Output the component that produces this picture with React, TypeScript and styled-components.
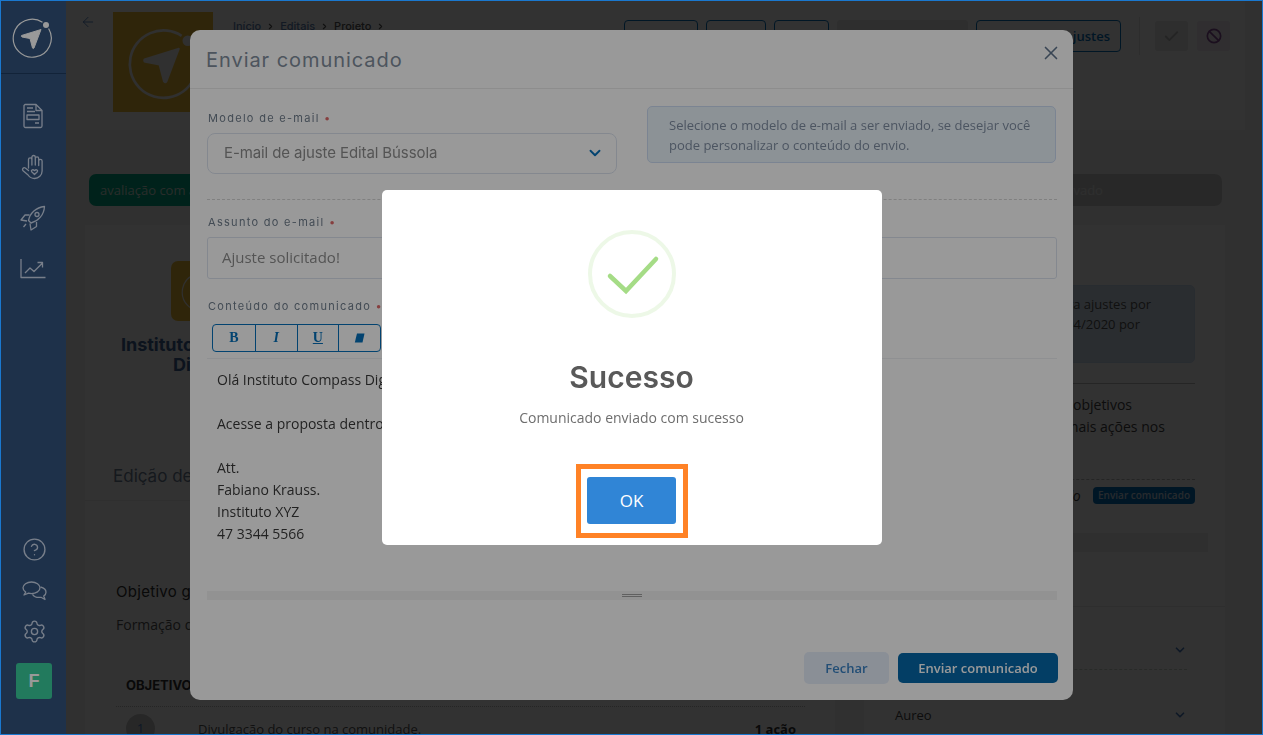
import styled, { createGlobalStyle } from "styled-components";
import { ChevronDown, CircleHelp, Settings, X, Check, Ban, ArrowLeft, ChevronRight } from "lucide-react";

const GlobalStyle = createGlobalStyle`
  html, body {
    margin: 0;
    padding: 0;
    height: 100%;
    overflow: hidden;
    font-family: "Open Sans", "Liberation Sans", sans-serif;
  }
  * {
    box-sizing: border-box;
  }
`;

const HEADING_FONT = `"Inter", "Liberation Sans", sans-serif`;

const AppRoot = styled.div`
  display: flex;
  width: 1263px;
  height: 735px;
  overflow: hidden;
  background: #f5f5f5;
`;

/* sits above the first backdrop, only the second one dims it */
const Sidebar = styled.nav`
  position: relative;
  z-index: 2;
  flex: 0 0 66px;
  display: flex;
  flex-direction: column;
  background: #32537c;
  color: #c8d3e6;
`;

const SideLogo = styled.div`
  height: 74px;
  display: flex;
  align-items: center;
  justify-content: center;
  border-bottom: 1px solid #1f3b60;
  padding-right: 2px;
`;

const SideNav = styled.div`
  display: flex;
  flex-direction: column;
  padding-top: 16px;
`;

const SideItem = styled.div<{ $h?: number }>`
  height: ${(p) => p.$h ?? 51}px;
  display: flex;
  align-items: center;
  justify-content: center;
`;

const SideBottom = styled.div`
  margin-top: auto;
  display: flex;
  flex-direction: column;
  align-items: center;
  padding: 0 0 36px 2px;
`;

const Avatar = styled.div`
  width: 36px;
  height: 36px;
  margin-top: 11px;
  border-radius: 3px;
  background: #3acb9b;
  color: #fff;
  font: bold 18px "Liberation Sans", sans-serif;
  display: flex;
  align-items: center;
  justify-content: center;
`;

const Main = styled.main`
  flex: 1;
  display: flex;
  flex-direction: column;
  min-width: 0;
`;

const HeaderCard = styled.header`
  width: 1179px;
  height: 130px;
  flex: none;
  display: flex;
  align-items: flex-start;
  padding: 12px 6px 0 14px;
  background: #fff;
`;

const BackLink = styled.div`
  width: 33px;
  padding-top: 1px;
  color: #4b7cc0;
`;

const YellowLogo = styled.div`
  width: 100px;
  height: 100px;
  flex: none;
  background: #efbf37;
  display: flex;
  align-items: center;
  justify-content: center;
`;

const Crumbs = styled.div`
  display: flex;
  align-items: center;
  gap: 5px;
  margin: 7px 0 0 20px;
  font: 500 11px ${HEADING_FONT};
  color: #5d82b3;
  white-space: nowrap;
`;

const CrumbCurrent = styled.span`
  color: #555;
`;

const HeaderActions = styled.div`
  margin-left: auto;
  display: flex;
  align-items: center;
  height: 32px;
  margin-top: 8px;
`;

const OutlineBtn = styled.div<{ $w: number }>`
  width: ${(p) => p.$w}px;
  height: 32px;
  margin-right: 8px;
  border: 1px solid #0571bb;
  border-radius: 4px;
  color: #0571bb;
  font: 600 13px "Open Sans", sans-serif;
  display: flex;
  align-items: center;
  justify-content: flex-end;
  padding-right: 10px;
`;

const GrayBtn = styled.div`
  width: 131px;
  height: 32px;
  margin-right: 8px;
  background: #ececec;
  border-radius: 3px;
`;

const HeaderDivider = styled.div`
  width: 1px;
  height: 38px;
  margin: 0 15px 0 10px;
  background: #e6e6e6;
`;

const SquareBtn = styled.div<{ $bg: string; $fg: string }>`
  width: 33px;
  height: 30px;
  margin-right: 9px;
  border-radius: 3px;
  background: ${(p) => p.$bg};
  color: ${(p) => p.$fg};
  display: flex;
  align-items: center;
  justify-content: center;
`;

const StatusRow = styled.div`
  display: flex;
  justify-content: space-between;
  margin: 44px 41px 0 23px;
  height: 32px;
`;

const StatusPill = styled.div<{ $bg: string; $fg: string; $w: number; $pad: number }>`
  width: ${(p) => p.$w}px;
  border-radius: 7px;
  background: ${(p) => p.$bg};
  color: ${(p) => p.$fg};
  padding-left: ${(p) => p.$pad}px;
  font-size: 13px;
  line-height: 32px;
`;

const Columns = styled.div`
  display: grid;
  grid-template-columns: 750px 361px;
  column-gap: 29px;
  margin: 19px 0 0 19px;
`;

const Card = styled.section`
  background: #fff;
  height: 700px;
`;

const OrgBlock = styled.div`
  width: 200px;
  margin: 36px 0 0 16px;
  display: flex;
  flex-direction: column;
  align-items: center;
`;

const OrgLogo = styled.div`
  width: 60px;
  height: 60px;
  border-radius: 7px;
  background: #efbf37;
  display: flex;
  align-items: center;
  justify-content: center;
`;

const OrgName = styled.div`
  margin-top: 14px;
  font: 700 18px/20px ${HEADING_FONT};
  color: #3f6496;
  text-align: center;
`;

const CardTabs = styled.div`
  height: 49px;
  margin-top: 77px;
  border-bottom: 1px solid #eee;
  padding: 12px 0 0 28px;
  font: 400 17px/24px ${HEADING_FONT};
  color: #6f8096;
`;

const ObjectiveBlock = styled.div`
  padding: 81px 30px 0 31px;
`;

const ObjectiveTitle = styled.div`
  font: 400 15px/20px ${HEADING_FONT};
  letter-spacing: 0.3px;
  color: #333;
`;

const ObjectiveText = styled.div`
  margin-top: 13px;
  font-size: 14px;
  line-height: 20px;
  color: #555;
`;

const TableHead = styled.div`
  margin-top: 40px;
  padding: 0 0 11px 10px;
  border-bottom: 1px dotted #bbb;
  font: 700 13px/20px ${HEADING_FONT};
  color: #333;
`;

const TableRow = styled.div`
  display: grid;
  grid-template-columns: 72px 1fr auto;
  align-items: center;
  padding: 7px 9px 0 10px;
  font-size: 13px;
  color: #555;
`;

const RowNumber = styled.div`
  width: 29px;
  height: 29px;
  border-radius: 50%;
  background: #c8c8c8;
  color: #4b7cc0;
  text-align: center;
  line-height: 29px;
`;

const RowCount = styled.b`
  color: #333;
`;

const RightPad = styled.div`
  padding: 60px 30px 0 16px;
`;

const SideInfo = styled.div`
  height: 78px;
  padding: 8px 0 0 47px;
  border: 1px solid #cfe0f5;
  border-radius: 5px;
  background: #d8e6f4;
  color: #555;
  font-size: 13px;
  line-height: 20px;
  white-space: nowrap;
`;

const SideNote = styled.div`
  margin-top: 20px;
  padding: 10px 0 0 56px;
  border-top: 1px solid #bbb;
  font-size: 14px;
  line-height: 22px;
  color: #444;
  white-space: nowrap;
`;

const NoteRow = styled.div`
  margin-top: 41px;
  padding-top: 6px;
  border-top: 1px dashed #bbb;
  display: flex;
  align-items: center;
  justify-content: space-between;
  font-size: 14px;
  color: #444;
`;

const NoteStatus = styled.span`
  padding-left: 70px;
  font-style: italic;
`;

const NoteBadge = styled.span`
  height: 17px;
  padding: 0 5px;
  border-radius: 4px;
  background: #0571bb;
  color: #c4d8e8;
  font: 600 10px/17px "Open Sans", sans-serif;
`;

const Band = styled.div`
  height: 19px;
  margin: 28px -13px 0 0;
  background: #f0f0f0;
`;

const SelectList = styled.div`
  margin: 54px -30px 0 -16px;
  padding: 0 38px 0 31px;
  border-top: 1px solid #eaeaea;
`;

const ListItem = styled.div<{ $h: number; $dashed?: boolean }>`
  height: ${(p) => p.$h}px;
  display: flex;
  align-items: center;
  justify-content: space-between;
  font-size: 13px;
  color: #444;
  padding-top: ${(p) => (p.$dashed ? 24 : 0)}px;
  border-bottom: ${(p) => (p.$dashed ? "1px dashed #cfd8cf" : "none")};
`;

const Backdrop = styled.div<{ $alpha: number; $z: number }>`
  position: fixed;
  inset: 0;
  z-index: ${(p) => p.$z};
  background: rgba(0, 0, 0, ${(p) => p.$alpha});
  display: flex;
  justify-content: center;
  align-items: center;
`;

const SendModal = styled.div`
  position: fixed;
  z-index: 3;
  top: 30px;
  left: 190px;
  width: 883px;
  height: 670px;
  background: #fff;
  border-radius: 10px;
  display: flex;
  flex-direction: column;
`;

const ModalHeader = styled.div`
  height: 59px;
  flex: none;
  display: flex;
  align-items: center;
  justify-content: space-between;
  padding: 1px 11px 0 16px;
  border-bottom: 1px solid #ececec;
`;

const ModalTitle = styled.h2`
  margin: 0;
  font: 400 20px/24px ${HEADING_FONT};
  letter-spacing: 0.95px;
  color: #808d9c;
`;

const CloseBtn = styled.div`
  color: #5f748d;
  display: flex;
  margin-top: -13px;
`;

const ModalBody = styled.div`
  flex: 1;
  display: flex;
  flex-direction: column;
  padding: 17px 16px 0 17px;
`;

const TopRow = styled.div`
  display: grid;
  grid-template-columns: 410px 409px;
  column-gap: 30px;
  height: 68px;
`;

const FieldCol = styled.div`
  display: flex;
  flex-direction: column;
  justify-content: flex-end;
`;

const FieldLabel = styled.label<{ $top?: number }>`
  display: block;
  height: 14px;
  margin-top: ${(p) => p.$top ?? 0}px;
  margin-bottom: 8px;
  padding-left: 1px;
  font: 400 11px/14px ${HEADING_FONT};
  letter-spacing: 1.3px;
  color: #6f7d8c;
  white-space: nowrap;
`;

const Req = styled.span`
  color: #e06a6a;
`;

const SelectBox = styled.div`
  height: 41px;
  display: flex;
  align-items: center;
  justify-content: space-between;
  padding: 0 12px 2px 16px;
  border: 1px solid #dce3ef;
  border-radius: 8px;
  font: 400 15px ${HEADING_FONT};
  letter-spacing: -0.1px;
  color: #8d8d8d;
`;

const SelectArrow = styled.span`
  display: flex;
  color: #0571bb;
`;

const HintBox = styled.div`
  height: 57px;
  padding: 8px 21px;
  border: 1px solid #cddcf3;
  border-radius: 5px;
  background: #eaf3fb;
  color: #7f8ea2;
  font-size: 13px;
  line-height: 20px;
`;

const DashedLine = styled.div`
  margin-top: 25px;
  border-top: 1px dashed #d5d5d5;
`;

const TextInput = styled.div`
  height: 42px;
  display: flex;
  align-items: center;
  padding: 0 0 3px 14px;
  border: 1px solid #dce3ef;
  border-radius: 3px;
  font-size: 15px;
  color: #8d8d8d;
`;

const Editor = styled.div`
  height: 280px;
  display: flex;
  flex-direction: column;
  background: #fff;
  margin-top: -1px;
  border-radius: 3px;
`;

const EditorToolbar = styled.div`
  height: 39px;
  flex: none;
  padding: 4px 5px;
  border-bottom: 1px solid #eef0f4;
`;

const ToolGroup = styled.div`
  display: inline-flex;
  height: 28px;
  border: 1px solid #0571bb;
  border-radius: 4px;
`;

const ToolBtn = styled.div<{ $italic?: boolean; $under?: boolean }>`
  width: 41.75px;
  display: flex;
  align-items: center;
  justify-content: center;
  border-left: 1px solid #0571bb;
  color: #0571bb;
  font: bold 14px "Liberation Serif", serif;
  font-style: ${(p) => (p.$italic ? "italic" : "normal")};
  text-decoration: ${(p) => (p.$under ? "underline" : "none")};
  &:first-child {
    border-left: none;
  }
`;

const EditorText = styled.div`
  flex: 1;
  padding: 10px 10px 0;
  font-size: 14px;
  line-height: 22px;
  color: #3a3a3a;
`;

const EditorLine = styled.div`
  min-height: 22px;
  white-space: nowrap;
`;

const ResizeBar = styled.div`
  height: 9px;
  flex: none;
  background: #f4f4f4;
  display: flex;
  flex-direction: column;
  align-items: center;
  justify-content: center;
  gap: 1px;
`;

const ResizeLine = styled.span`
  width: 20px;
  height: 1px;
  background: #a0a0a0;
`;

const ModalFooter = styled.div`
  margin-top: 52px;
  display: flex;
  justify-content: flex-end;
  align-items: center;
  gap: 9px;
  margin-right: -1px;
`;

const FooterBtn = styled.div<{ $primary?: boolean }>`
  width: ${(p) => (p.$primary ? 160 : 85)}px;
  height: ${(p) => (p.$primary ? 30 : 32)}px;
  border-radius: 5px;
  background: ${(p) => (p.$primary ? "#0568a8" : "#e6eefb")};
  color: ${(p) => (p.$primary ? "#fff" : "#3a82c4")};
  font: 600 13px "Open Sans", sans-serif;
  display: flex;
  align-items: center;
  justify-content: center;
`;

const AlertBox = styled.div`
  width: 500px;
  height: 355px;
  background: #fff;
  border-radius: 5px;
  display: flex;
  flex-direction: column;
  align-items: center;
  padding-top: 40px;
`;

const AlertTitle = styled.h2`
  margin: 39px 0 0;
  font: 600 30px/40px ${HEADING_FONT};
  color: #595959;
`;

const AlertText = styled.div`
  margin-top: 11px;
  font-size: 14px;
  line-height: 20px;
  color: #6e6e6e;
`;

const OkWrap = styled.div`
  position: relative;
  margin-top: 49px;
`;

const OkButton = styled.button`
  display: block;
  width: 89px;
  height: 47px;
  border: none;
  border-radius: 3px;
  background: #3085d6;
  color: #fff;
  font: 17px "Open Sans", sans-serif;
`;

/* orange annotation drawn over the screenshot */
const Highlight = styled.div`
  position: absolute;
  top: -13px;
  right: -12px;
  bottom: -14px;
  left: -11px;
  border: 5px solid #ff8226;
`;

const ScreenFrame = styled.div`
  position: fixed;
  inset: 0;
  z-index: 6;
  border: 1px solid #1a78cf;
  pointer-events: none;
`;

function CompassLogo({ size, color, weight = 1.2 }: { size: number; color: string; weight?: number }) {
  return (
    <svg width={size} height={size} viewBox="0 0 44 44" fill="none">
      <path d="M32.5 7.2A19 19 0 1 0 38.6 13.5" stroke={color} strokeWidth={weight} />
      <circle cx="36" cy="10" r="3" fill={color} />
      <path d="M31 14.5 11.5 20.5 Q11 21.6 12 22 L20 23.5 22.5 33 Q23.3 34 24 33 Z" fill={color} stroke={color} strokeWidth="1" strokeLinejoin="round" />
    </svg>
  );
}

function DocIcon() {
  return (
    <svg width="22" height="26" viewBox="0 0 22 26" fill="none" stroke="currentColor" strokeWidth="1.3" strokeLinejoin="round">
      <path d="M3 1.5h11l6 6V23a1.5 1.5 0 0 1-1.5 1.5h-15A1.500 1.500 0 0 1 2 23V2.5z" />
      <path d="M14 1.5v6h6M5 5h6M5 8.5h8M13 20h4" />
      <rect x="5" y="12" width="12" height="4.5" />
    </svg>
  );
}

function HandIcon() {
  return (
    <svg width="24" height="26" viewBox="0 0 24 26" fill="none" stroke="currentColor" strokeWidth="1.3" strokeLinecap="round" strokeLinejoin="round">
      <path d="M7.500 14V5.500a1.700 1.700 0 0 1 3.400 0V11V3.200a1.700 1.700 0 0 1 3.400 0V11V4.500a1.700 1.700 0 0 1 3.400 0V11.500V7a1.700 1.700 0 0 1 3.400 0V17c0 4-3.500 7.500-7.500 7.500-3 0-5-1.300-6.500-3.500L1.800 16.500c-1-1.500.8-3.500 2.500-2.500l3.200 2.500" />
      <path d="M13.500 20.500l-2.800-2.800c-1-1.300.9-3 2.800-1.100 1.900-1.900 3.800-.2 2.800 1.100z" />
    </svg>
  );
}

function RocketIcon() {
  return (
    <svg width="26" height="26" viewBox="0 0 26 26" fill="none" stroke="currentColor" strokeWidth="1.3" strokeLinejoin="round">
      <path d="M8.500 15.500C10 8 16 2.500 24.500 1.500 24 10 18.500 16 11 18z" />
      <circle cx="17" cy="9.500" r="2" />
      <path d="M9.500 10H5L1 15l6 1M16.500 17v4.500L11 25l-1-6.500M6 19l-2.500 3" />
    </svg>
  );
}

function ChartIcon() {
  return (
    <svg width="26" height="20" viewBox="0 0 26 20" fill="none" stroke="currentColor" strokeWidth="1.3" strokeLinejoin="round">
      <path d="M1 0v18.500h24.500" />
      <path d="M5 14l5-5 4 3.500 8-8M17.500 3.500h5v5" />
    </svg>
  );
}

function ChatIcon() {
  return (
    <svg width="25" height="20" viewBox="0 0 25 20" fill="none" stroke="currentColor" strokeWidth="1.3" strokeLinejoin="round">
      <path d="M9.500 1C4.800 1 1 3.600 1 6.800c0 1.700 1 3.200 2.700 4.300L2 14l4.500-1.800c1 .3 2 .4 3 .4 4.700 0 8.500-2.600 8.500-5.800S14.200 1 9.500 1z" />
      <path d="M18.500 6c3.200.8 5.500 2.800 5.500 5.200 0 1.500-.9 2.900-2.300 3.900l1.300 3.400-4-2.200c-3.500.5-7-.6-8.500-3" />
    </svg>
  );
}

function EraserIcon() {
  return (
    <svg width="11" height="10" viewBox="0 0 11 10" fill="currentColor">
      <path d="M3 .500h7.500L8.500 9.500H.8z" />
    </svg>
  );
}

function SuccessIcon() {
  return (
    <svg width="88" height="88" viewBox="0 0 88 88" fill="none">
      <circle cx="44" cy="44" r="42" stroke="#a5dc86" strokeOpacity="0.2" strokeWidth="4" />
      <path d="M22 46 38 61 68 29" stroke="#a5dc86" strokeWidth="4.500" strokeLinecap="round" strokeLinejoin="miter" />
    </svg>
  );
}

const messageLines = [
  "Olá Instituto Compass Digital,",
  "",
  "Acesse a proposta dentro da plataforma.",
  "",
  "Att.",
  "Fabiano Krauss.",
  "Instituto XYZ",
  "47 3344 5566",
];

function App() {
  return (
    <AppRoot>
      <GlobalStyle />
      <Sidebar>
        <SideLogo>
          <CompassLogo size={44} color="#fff" />
        </SideLogo>
        <SideNav>
          <SideItem><DocIcon /></SideItem>
          <SideItem><HandIcon /></SideItem>
          <SideItem><RocketIcon /></SideItem>
          <SideItem><ChartIcon /></SideItem>
        </SideNav>
        <SideBottom>
          <SideItem $h={41}><CircleHelp size={25} strokeWidth={1.3} /></SideItem>
          <SideItem $h={41}><ChatIcon /></SideItem>
          <SideItem $h={41}><Settings size={25} strokeWidth={1.3} /></SideItem>
          <Avatar>F</Avatar>
        </SideBottom>
      </Sidebar>

      <Main>
        <HeaderCard>
          <BackLink><ArrowLeft size={16} strokeWidth={1.3} /></BackLink>
          <YellowLogo><CompassLogo size={78} color="#f2f2f2" weight={1.5} /></YellowLogo>
          <Crumbs>
            Início <ChevronRight size={9} strokeWidth={3} color="#555" />
            Editais <ChevronRight size={9} strokeWidth={3} color="#555" />
            <CrumbCurrent>Projeto</CrumbCurrent> <ChevronRight size={9} strokeWidth={3} color="#555" />
          </Crumbs>
          <HeaderActions>
            <OutlineBtn $w={74} />
            <OutlineBtn $w={60} />
            <OutlineBtn $w={55} />
            <GrayBtn />
            <OutlineBtn $w={145}>Solicitar ajustes</OutlineBtn>
            <HeaderDivider />
            <SquareBtn $bg="#e8e8e8" $fg="#b8b8b8"><Check size={17} strokeWidth={2.5} /></SquareBtn>
            <SquareBtn $bg="#f1e8f2" $fg="#8a4e9c"><Ban size={16} strokeWidth={2.5} /></SquareBtn>
          </HeaderActions>
        </HeaderCard>

        <StatusRow>
          <StatusPill $bg="#00b088" $fg="#d0e0da" $w={300} $pad={11}>avaliação com ajustes</StatusPill>
          <StatusPill $bg="#cfcfcf" $fg="#ececec" $w={300} $pad={115}>Reprovado</StatusPill>
        </StatusRow>

        <Columns>
          <Card>
            <OrgBlock>
              <OrgLogo><CompassLogo size={44} color="#f2f2f2" /></OrgLogo>
              <OrgName>Instituto Compass Digital</OrgName>
            </OrgBlock>
            <CardTabs>Edição de proposta</CardTabs>
            <ObjectiveBlock>
              <ObjectiveTitle>Objetivo geral</ObjectiveTitle>
              <ObjectiveText>Formação de jovens</ObjectiveText>
              <TableHead>OBJETIVOS</TableHead>
              <TableRow>
                <RowNumber>1</RowNumber>
                <span>Divulgação do curso na comunidade.</span>
                <RowCount>1 ação</RowCount>
              </TableRow>
            </ObjectiveBlock>
          </Card>
          <Card>
            <RightPad>
              <SideInfo>
                Seu projeto enviado para ajustes por<br />
                Fabiano Krauss em 14/04/2020 por<br />
                Instituto XYZ
              </SideInfo>
              <SideNote>
                Ajuste os textos e os objetivos<br />
                e reveja todas as demais ações nos
              </SideNote>
              <NoteRow>
                <NoteStatus>Comunicado enviado</NoteStatus>
                <NoteBadge>Enviar comunicado</NoteBadge>
              </NoteRow>
              <Band />
              <SelectList>
                <ListItem $h={63} $dashed>
                  <span>Ouro</span>
                  <ChevronDown size={14} strokeWidth={3} color="#4b7cc0" />
                </ListItem>
                <ListItem $h={89}>
                  <span>Aureo</span>
                  <ChevronDown size={14} strokeWidth={3} color="#4b7cc0" />
                </ListItem>
              </SelectList>
            </RightPad>
          </Card>
        </Columns>
      </Main>

      <Backdrop $alpha={0.67} $z={1} />

      <SendModal>
        <ModalHeader>
          <ModalTitle>Enviar comunicado</ModalTitle>
          <CloseBtn><X size={22} strokeWidth={1.8} /></CloseBtn>
        </ModalHeader>
        <ModalBody>
          <TopRow>
            <FieldCol>
              <FieldLabel>Modelo de e-mail <Req>•</Req></FieldLabel>
              <SelectBox>
                E-mail de ajuste Edital Bússola
                <SelectArrow><ChevronDown size={18} strokeWidth={2.5} /></SelectArrow>
              </SelectBox>
            </FieldCol>
            <HintBox>
              Selecione o modelo de e-mail a ser enviado, se desejar você pode personalizar o conteúdo do envio.
            </HintBox>
          </TopRow>
          <DashedLine />
          <FieldLabel $top={15}>Assunto do e-mail <Req>•</Req></FieldLabel>
          <TextInput>Ajuste solicitado!</TextInput>
          <FieldLabel $top={20}>Conteúdo do comunicado <Req>•</Req></FieldLabel>
          <Editor>
            <EditorToolbar>
              <ToolGroup>
                <ToolBtn>B</ToolBtn>
                <ToolBtn $italic>I</ToolBtn>
                <ToolBtn $under>U</ToolBtn>
                <ToolBtn><EraserIcon /></ToolBtn>
              </ToolGroup>
            </EditorToolbar>
            <EditorText>
              {messageLines.map((line, i) => (
                <EditorLine key={i}>{line}</EditorLine>
              ))}
            </EditorText>
            <ResizeBar>
              <ResizeLine />
              <ResizeLine />
            </ResizeBar>
          </Editor>
          <ModalFooter>
            <FooterBtn>Fechar</FooterBtn>
            <FooterBtn $primary>Enviar comunicado</FooterBtn>
          </ModalFooter>
        </ModalBody>
      </SendModal>

      <Backdrop $alpha={0.4} $z={4}>
        <AlertBox>
          <SuccessIcon />
          <AlertTitle>Sucesso</AlertTitle>
          <AlertText>Comunicado enviado com sucesso</AlertText>
          <OkWrap>
            <OkButton>OK</OkButton>
            <Highlight />
          </OkWrap>
        </AlertBox>
      </Backdrop>

      <ScreenFrame />
    </AppRoot>
  );
}

export default App;
